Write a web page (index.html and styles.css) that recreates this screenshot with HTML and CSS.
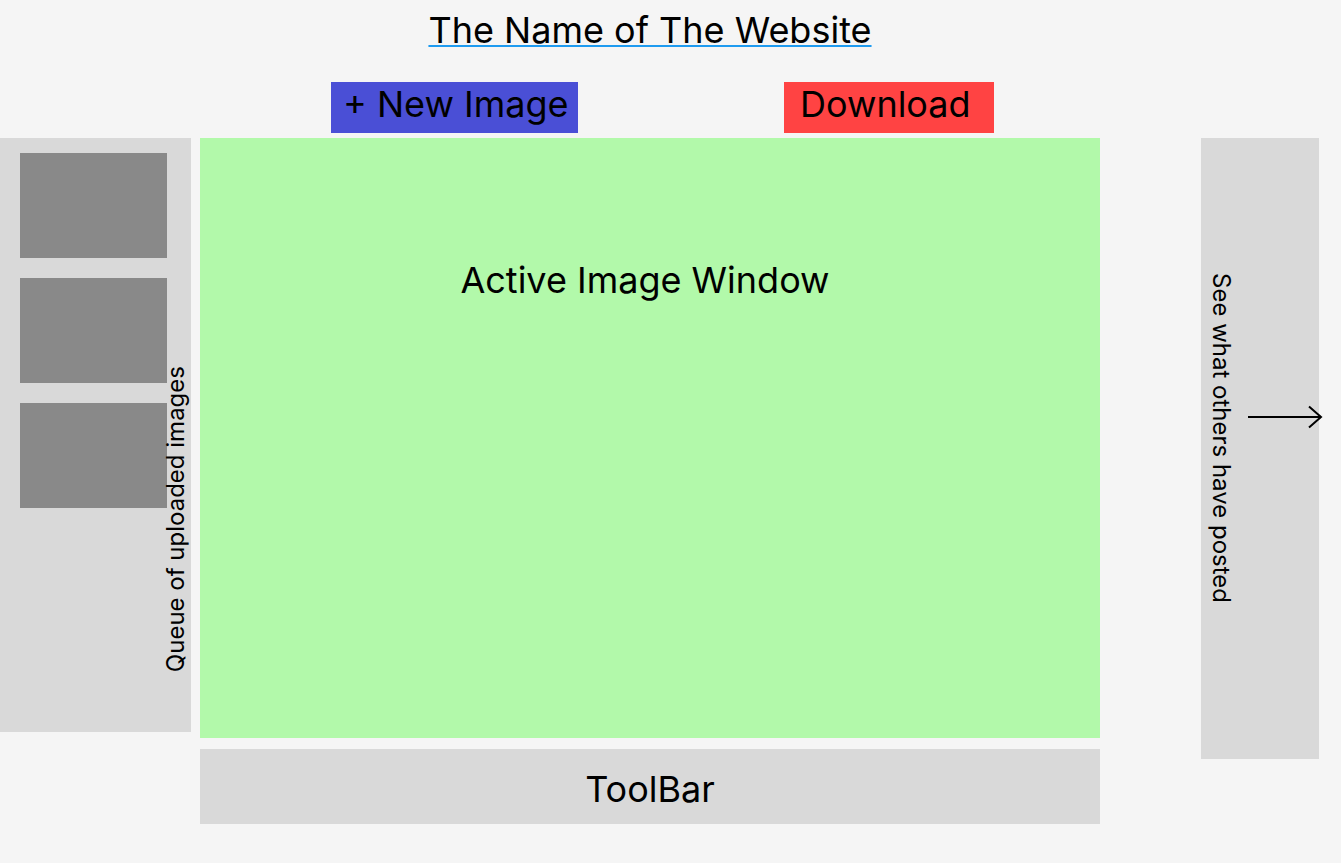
FILE: index.html
```html
<!DOCTYPE html>
<html lang="en">
<head>
<meta charset="utf-8">
<title>The Name of The Website</title>
<link rel="stylesheet" href="styles.css">
</head>
<body>
<header class="header">
  <a class="site-title" href="#">The Name of The Website</a>
</header>
<div class="actions">
  <button class="btn btn-new" type="button">+ New Image</button>
  <button class="btn btn-download" type="button">Download</button>
</div>
<main class="workspace">
  <aside class="queue">
    <div class="thumbs">
      <div class="thumb"></div>
      <div class="thumb"></div>
      <div class="thumb"></div>
    </div>
    <div class="queue-label">Queue of uploaded images</div>
  </aside>
  <section class="editor">
    <div class="canvas">
      <div class="canvas-label">Active Image Window</div>
    </div>
    <div class="toolbar">ToolBar</div>
  </section>
  <aside class="others">
    <div class="others-label">See what others have posted</div>
    <svg class="arrow" width="76" height="24" viewBox="0 0 76 24" aria-hidden="true">
      <path d="M1 12H74M62 1.5L74 12L62 22.5" fill="none" stroke="#000" stroke-width="2"/>
    </svg>
  </aside>
</main>
</body>
</html>
```
FILE: styles.css
```css
* { box-sizing: border-box; }

html, body {
  margin: 0;
  padding: 0;
}

body {
  width: 1341px;
  height: 863px;
  background: #f5f5f5;
  font-family: "Inter", "Liberation Sans", sans-serif;
  color: #000;
  overflow: hidden;
}

.header {
  display: flex;
  justify-content: center;
  padding-top: 10px;
  height: 82px;
}

.site-title {
  color: #000;
  font-size: 36px;
  line-height: 40px;
  height: 40px;
  text-decoration: underline;
  text-decoration-color: #1e9bf0;
  text-decoration-thickness: 2px;
  text-underline-offset: 2px;
  margin-right: 41px;
}

.actions {
  display: flex;
  padding-left: 331px;
  height: 56px;
}

.btn {
  border: 0;
  border-radius: 0;
  height: 51px;
  font-family: inherit;
  font-size: 36px;
  color: #000;
  text-align: left;
  padding: 0 0 7px 0;
  line-height: 40px;
  align-self: flex-start;
}

.btn-new {
  width: 247px;
  padding-left: 12px;
  background: #4a4fd6;
}

.btn-download {
  width: 210px;
  padding-left: 16px;
  margin-left: 206px;
  background: #ff4343;
}

.workspace {
  display: flex;
  align-items: flex-start;
}

.queue {
  width: 191px;
  height: 594px;
  background: #d9d9d9;
  display: flex;
  padding: 15px 0 0 20px;
}

.thumbs {
  display: flex;
  flex-direction: column;
  gap: 20px;
  width: 147px;
  flex: none;
}

.thumb {
  height: 105px;
  background: #898989;
}

.queue-label {
  writing-mode: vertical-rl;
  transform: rotate(180deg);
  font-size: 24px;
  line-height: 26px;
  align-self: flex-end;
  margin-bottom: 60px;
  margin-left: -4px;
  white-space: nowrap;
}

.editor {
  width: 900px;
  margin-left: 9px;
  display: flex;
  flex-direction: column;
  gap: 11px;
}

.canvas {
  height: 600px;
  background: #b2f9aa;
  display: flex;
  justify-content: center;
  padding-top: 122px;
}

.canvas-label {
  font-size: 36px;
  line-height: 40px;
  height: 40px;
  margin-right: 10px;
}

.toolbar {
  height: 75px;
  background: #d9d9d9;
  font-size: 36px;
  display: flex;
  align-items: center;
  justify-content: center;
  padding-top: 4px;
}

.others {
  position: relative;
  width: 118px;
  height: 621px;
  margin-left: 101px;
  background: #d9d9d9;
  padding: 135px 0 0 7px;
}

.others-label {
  writing-mode: vertical-rl;
  font-size: 24px;
  line-height: 26px;
  white-space: nowrap;
}

.arrow {
  position: absolute;
  left: 46px;
  top: 267px;
}
```
